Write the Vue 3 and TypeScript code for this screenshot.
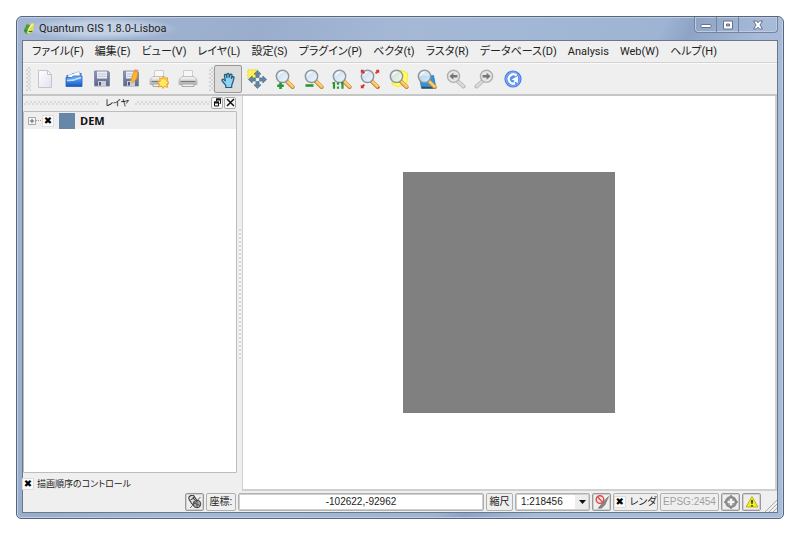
<script setup lang="ts">
import { ref } from 'vue'

interface Tool {
  id: string
  label: string
}

const menus: string[] = [
  'ファイル(F)', '編集(E)', 'ビュー(V)', 'レイヤ(L)', '設定(S)', 'プラグイン(P)',
  'ベクタ(t)', 'ラスタ(R)', 'データベース(D)', 'Analysis', 'Web(W)', 'ヘルプ(H)',
]

const fileTools: Tool[] = [
  { id: 'new', label: '新規' },
  { id: 'open', label: '開く' },
  { id: 'save', label: '保存' },
  { id: 'save-as', label: '名前をつけて保存' },
  { id: 'composer', label: '新規プリントコンポーザ' },
  { id: 'print', label: '印刷' },
]

const mapTools: Tool[] = [
  { id: 'pan', label: '地図移動' },
  { id: 'pan-selection', label: '選択部分に移動' },
  { id: 'zoom-in', label: '拡大' },
  { id: 'zoom-out', label: '縮小' },
  { id: 'zoom-actual', label: '実ピクセルサイズ' },
  { id: 'zoom-full', label: '全域表示' },
  { id: 'zoom-selection', label: '選択部分にズーム' },
  { id: 'zoom-layer', label: 'レイヤの領域にズーム' },
  { id: 'zoom-last', label: '直前の表示領域' },
  { id: 'zoom-next', label: '次の表示領域' },
  { id: 'refresh', label: '再読み込み' },
]

const activeTool = ref('pan')
const layerVisible = ref(true)
const controlOrder = ref(true)
const render = ref(true)
const coordinates = ref('-102622,-92962')
const scale = ref('1:218456')
</script>

<template>
  <div class="desktop">
    <svg class="defs" aria-hidden="true">
      <defs>
        <linearGradient id="handle" x1="0" y1="1" x2="1" y2="0">
          <stop offset="0" stop-color="#d98522" />
          <stop offset=".55" stop-color="#ffd873" />
          <stop offset="1" stop-color="#e5a23c" />
        </linearGradient>
        <linearGradient id="glass" x1="0" y1="0" x2="1" y2="1">
          <stop offset="0" stop-color="#bcd5f0" />
          <stop offset="1" stop-color="#f4f9fe" />
        </linearGradient>
        <linearGradient id="metal" x1="0" y1="0" x2="0" y2="1">
          <stop offset="0" stop-color="#8f98b4" />
          <stop offset="1" stop-color="#5b6586" />
        </linearGradient>
        <linearGradient id="blue" x1="0" y1="0" x2="0" y2="1">
          <stop offset="0" stop-color="#74b5fa" />
          <stop offset="1" stop-color="#1556c4" />
        </linearGradient>
        <linearGradient id="paper" x1="0" y1="0" x2="1" y2="1">
          <stop offset="0" stop-color="#ffffff" />
          <stop offset="1" stop-color="#dfe2ec" />
        </linearGradient>
        <linearGradient id="plastic" x1="0" y1="0" x2="0" y2="1">
          <stop offset="0" stop-color="#fbfbfb" />
          <stop offset="1" stop-color="#a9a9a9" />
        </linearGradient>
        <symbol id="lens" viewBox="0 0 20 20">
          <path d="M12 12.5 17.6 18" stroke="#b98348" stroke-width="4" stroke-linecap="round" />
          <path d="M12.4 12.6 17.4 17.5" stroke="url(#handle)" stroke-width="3" stroke-linecap="round" />
          <circle cx="7.5" cy="7.3" r="6.2" fill="url(#glass)" fill-opacity=".85" stroke="#8e949c" stroke-width="1.4" />
          <path d="M3.6 6.6a4 4 0 0 1 4-3.3" fill="none" stroke="#fff" stroke-width="1.2" />
        </symbol>
        <symbol id="printer" viewBox="0 0 20 20">
          <path d="M5.5 1.5h9V9h-9z" fill="#f8f8f8" stroke="#cdcdcd" />
          <path d="M4 7.5h12q2.6 2 3 4.5v3.5q-9 2-18 0V12q.4-2.5 3-4.5z" fill="url(#plastic)" stroke="#b0b0b0" stroke-width=".8" />
          <path d="M2.5 12.5h15" stroke="#777" stroke-width="1.2" />
          <path d="M4 15h12v2.5H4z" fill="#eee" stroke="#999" stroke-width=".8" />
        </symbol>
        <symbol id="disk" viewBox="0 0 20 20">
          <path d="M2.5 2H16l1.5 1.5V17h-15z" fill="url(#metal)" stroke="#7b83a0" stroke-width=".8" />
          <path d="M5 2.5h10v7H5z" fill="#edf0f6" />
          <path d="M5.5 5h9M5.5 7.3h9" stroke="#b9c2d4" />
          <path d="M6 12h8v5H6z" fill="#c9cedb" />
          <path d="M7 13h2v3.5H7z" fill="#50597a" />
        </symbol>
        <symbol id="arrow" viewBox="0 0 8 8">
          <path d="M4 .4 7.6 4.2h-2v3.2H2.4V4.2h-2z" fill="#6188a3" stroke="#466a84" stroke-width=".6" />
        </symbol>
      </defs>
    </svg>

    <main class="window">
      <header class="titlebar">
        <h1 class="title">
          <svg width="12" height="13" viewBox="0 0 13 13" aria-hidden="true">
            <path d="M4 1.5 8 3 6.5 12H2.8L.7 9z" fill="#4e9d3b" />
            <path d="M8.4 1 12 .6l-.9 7.7-5 4.2L4.4 11z" fill="#dde345" />
            <path d="M10.7 1.6 6.5 6.4 5.1 11" fill="none" stroke="#fff9a7" stroke-width="1.2" />
            <path d="M6 9.7h4M1.6 8.6 4 9.5" stroke="#236b2c" />
          </svg>
          Quantum GIS 1.8.0-Lisboa
        </h1>
        <div class="caption">
          <button type="button" aria-label="最小化">
            <svg width="12" height="10" viewBox="0 0 12 10"><rect x="1" y="4.5" width="10" height="3" rx=".8" fill="#fff" stroke="#65718a" /></svg>
          </button>
          <button type="button" aria-label="最大化">
            <svg width="12" height="10" viewBox="0 0 12 10"><path d="M1.5 1h9v8h-9zM4.5 4v2h3V4z" fill="#fff" fill-rule="evenodd" stroke="#65718a" /></svg>
          </button>
          <button type="button" class="close" aria-label="閉じる">
            <svg width="12" height="10" viewBox="0 0 12 10"><path d="M1.5 1h3L6 2.8 7.5 1h3L8 5l2.5 4h-3L6 7.2 4.5 9h-3L4 5z" fill="#fff" stroke="#65718a" /></svg>
          </button>
        </div>
      </header>

      <div class="client">
        <nav class="menubar">
          <button v-for="menu in menus" :key="menu" type="button">{{ menu }}</button>
        </nav>

        <div class="toolbar">
          <span class="grip"></span>
          <div class="tools file-tools">
            <button v-for="tool in fileTools" :key="tool.id" type="button" :aria-label="tool.label">
              <svg width="20" height="20" viewBox="0 0 20 20">
                <template v-if="tool.id === 'new'">
                  <path d="M3.5 1.5h9l4 4v13h-13z" fill="url(#paper)" stroke="#c2c4d0" />
                  <path d="M12.5 1.5v4h4z" fill="#fff" stroke="#c2c4d0" />
                </template>
                <template v-else-if="tool.id === 'open'">
                  <path d="M2.5 6h5l1-2h9v10h-15z" fill="#2d6fd4" />
                  <path d="m4 6.5 11-4 1.5 5v6H4z" fill="#fff" stroke="#9fbbe1" stroke-width=".7" />
                  <path d="M2 8.5h5.5l2-1.5H18v10.5H2z" fill="url(#blue)" stroke="#2162bf" stroke-width=".8" />
                  <path d="M3 11.5q7 .2 14-3" fill="none" stroke="#c2e0ff" stroke-width="1.5" />
                </template>
                <use v-else-if="tool.id === 'save'" href="#disk" width="20" height="20" />
                <template v-else-if="tool.id === 'save-as'">
                  <use href="#disk" width="20" height="20" />
                  <path d="m12 1 3.5-.5.8 8.5-3 5-2.3-1.5z" fill="#ffb52d" stroke="#e0922a" stroke-width=".7" transform="rotate(14 13 7)" />
                  <path d="m14 .8 3.3.8-.6 2.2-3.3-.8z" fill="#f0906a" />
                </template>
                <template v-else>
                  <use href="#printer" width="20" height="20" />
                  <path
                    v-if="tool.id === 'composer'"
                    d="m14.2 7 1.3 3.3 3.2-1.6-1.1 3.4 2.4 1.7-2.4 1.3 1.1 3.2-3.2-1-1.6 2.2-1.3-2.6-3.5 1.2 1.6-3.2-2.4-1.7 3-1-.7-3.4 2.6 1.3z"
                    fill="#ffec5e" stroke="#f3a021"
                  />
                </template>
              </svg>
            </button>
          </div>
          <span class="grip"></span>
          <div class="tools map-tools">
            <button
              v-for="tool in mapTools"
              :key="tool.id"
              type="button"
              :class="{ active: activeTool === tool.id }"
              :aria-label="tool.label"
              :aria-pressed="activeTool === tool.id"
              @click="activeTool = tool.id"
            >
              <svg width="20" height="20" viewBox="0 0 20 20">
                <path
                  v-if="tool.id === 'pan'"
                  d="M7.8 18.5v-2.2L4.2 12c-1-1.5.5-2.4 1.6-1.4l1.5 1.3-.9-5.3c-.1-1.4 1.6-1.7 2-.3l.5 2.3V5.2c.1-1.3 1.9-1.3 2.1 0l.2 3.1.9-2.5c.5-1.2 2.2-.7 1.9.6l-.6 3 1-1.4c.8-1 2.1-.2 1.6 1l-1.5 5.3-.8 2v2.2z"
                  fill="#8fd3f2" stroke="#265b7c" stroke-width="1.2" stroke-linejoin="round"
                />
                <template v-else-if="tool.id === 'pan-selection'">
                  <path d="M.8.8h9.7v8L.8 9.5z" fill="#ffee55" stroke="#e5ce3a" stroke-width=".8" stroke-dasharray="2 1" />
                  <use href="#arrow" x="6.5" y="1" width="8" height="8" />
                  <use href="#arrow" x="6.5" y="1" width="8" height="8" transform="rotate(90 10.5 10.5)" />
                  <use href="#arrow" x="6.5" y="1" width="8" height="8" transform="rotate(180 10.5 10.5)" />
                  <use href="#arrow" x="6.5" y="1" width="8" height="8" transform="rotate(270 10.5 10.5)" />
                </template>
                <template v-else-if="tool.id === 'refresh'">
                  <circle cx="10" cy="10" r="8" fill="#5e91ed" stroke="#4a7ce0" stroke-width="1.2" />
                  <circle cx="10" cy="10" r="7" fill="none" stroke="#8fb4f6" stroke-width=".8" />
                  <path d="M13.5 6.6A4.6 4.6 0 1 0 12 14.2" fill="none" stroke="#fff" stroke-width="2.2" />
                  <path d="m8.5 10.5 6.5-3.500v7l-2.300-1.300-2.200 1.800 1-3z" fill="#fff" />
                </template>
                <g v-else-if="tool.id === 'zoom-last' || tool.id === 'zoom-next'" :class="{ mirrored: tool.id === 'zoom-next' }">
                  <path d="m12 12.5 5.5 5" stroke="#b5b5b5" stroke-width="4" stroke-linecap="round" />
                  <path d="m12.2 12.6 5 4.6" stroke="#dadada" stroke-width="2.6" stroke-linecap="round" />
                  <circle cx="7.5" cy="7.3" r="6.1" fill="#e6e6e6" stroke="#b0b0b0" stroke-width="1.4" />
                  <path d="m3.4 7.3 4-3.5v2.3h4v2.4h-4v2.3z" fill="#757575" />
                </g>
                <template v-else>
                  <path v-if="tool.id === 'zoom-selection'" d="m4 3.5 9-2 5.5 2.7-.8 10.3-9 3.3L3 15z" fill="#ffff62" stroke="#f3ea28" />
                  <path v-if="tool.id === 'zoom-layer'" d="m2.5 8 14-1.5L19 19.3H4.5z" fill="#249bdf" stroke="#35658b" stroke-width=".7" />
                  <path v-if="tool.id === 'zoom-layer'" d="m5 17.5 14 .6v1.4H4.6z" fill="#3f4958" />
                  <use href="#lens" width="20" height="20" />
                  <path v-if="tool.id === 'zoom-in'" d="M2.2 16.7h6.6M5.5 13.5v6.4" stroke="#299735" stroke-width="2.6" />
                  <path v-if="tool.id === 'zoom-out'" d="M1.5 16.5h8" stroke="#299735" stroke-width="2.6" />
                  <path v-if="tool.id === 'zoom-actual'" d="M.5 14H2v5.8M9 14h1.5v5.8M6 13.5v2.2M6 17.6v2.2" fill="none" stroke="#299735" stroke-width="2.2" />
                  <path v-if="tool.id === 'zoom-full'" d="M.8 4V.8H4L3.5 2 5 3.8 3.8 5 2 3.5zM19.2 4V.8H16l.5 1.2L15 3.8 16.2 5 18 3.5zM.8 16v3.2H4L3.5 18 5 16.2 3.8 15 2 16.5zM19.2 17.5v1.7H17z" fill="#d83331" />
                </template>
              </svg>
            </button>
          </div>
        </div>

        <div class="workspace">
          <aside class="dock">
            <div class="dock-title">
              <span class="dots"></span>
              <h2>レイヤ</h2>
              <span class="dots"></span>
              <button type="button" aria-label="フロート">
                <svg width="9" height="9" viewBox="0 0 9 9"><path d="M3.5 3V1h4v4.5h-1M1.5 4h4v4h-4z" fill="none" stroke="#111" /><path d="M3 1.5h5M1 4.5h5" stroke="#111" stroke-width="2" /></svg>
              </button>
              <button type="button" aria-label="パネルを閉じる">
                <svg width="9" height="9" viewBox="0 0 9 9"><path d="m1 1 7 7M8 1 1 8" stroke="#111" stroke-width="1.5" /></svg>
              </button>
            </div>
            <div class="tree">
              <div class="layer">
                <button type="button" class="expand" aria-label="展開">
                  <svg width="8" height="8" viewBox="0 0 9 9"><path d="M.5.5h8v8h-8z" fill="#f8f8f8" stroke="#999" /><path d="M2 4.5h5M4.5 2v5" stroke="#555" /></svg>
                </button>
                <span class="branch"></span>
                <input id="layer-dem" v-model="layerVisible" type="checkbox" />
                <span class="swatch"></span>
                <label for="layer-dem">DEM</label>
              </div>
            </div>
            <label class="order"><input v-model="controlOrder" type="checkbox" />描画順序のコントロール</label>
          </aside>
          <div class="splitter"><span></span></div>
          <section class="canvas" aria-label="地図">
            <div class="raster"></div>
          </section>
        </div>

        <footer class="status">
          <button type="button" class="icon-button" aria-label="マウス位置の表示切替">
            <svg width="14" height="14" viewBox="0 0 14 14">
              <rect x="2" y="0" width="6" height="10" rx="3" fill="#ddd" stroke="#333" transform="rotate(-32 5 5)" />
              <path d="m2.5 5 4-2.5M5 2l1.5 3" stroke="#333" />
              <circle cx="9" cy="9" r="3.8" fill="#aaa" stroke="#444" />
              <path d="m2 13 10.5-11M6 8l6 2.5M9 5.5v7" stroke="#444" stroke-width=".8" />
            </svg>
          </button>
          <label class="cell coord-label" for="coordinates">座標:</label>
          <input id="coordinates" v-model="coordinates" class="coordinates" type="text" />
          <label class="cell scale-label" for="scale">縮尺</label>
          <div class="combo">
            <select id="scale" v-model="scale">
              <option>1:218456</option>
              <option>1:500000</option>
              <option>1:100000</option>
            </select>
            <svg width="7" height="4" viewBox="0 0 7 4" aria-hidden="true"><path d="M0 0h7L3.5 4z" fill="#111" /></svg>
          </div>
          <button type="button" class="icon-button" aria-label="描画の停止">
            <svg width="14" height="14" viewBox="0 0 14 14">
              <path d="M13.5 1.5 10 9.5 6.8 13l-3.5.3 3.9-5z" fill="#888" stroke="#666" stroke-width=".6" />
              <circle cx="5" cy="4.5" r="3.8" fill="#f8e8e8" stroke="#df4b4b" stroke-width="1.4" />
              <path d="m2.5 2 5 5" stroke="#df4b4b" stroke-width="1.4" />
            </svg>
          </button>
          <label class="cell render"><input v-model="render" type="checkbox" />レンダ</label>
          <output class="cell epsg">EPSG:2454</output>
          <button type="button" class="icon-button" aria-label="CRS の状態">
            <svg width="14" height="14" viewBox="0 0 14 14">
              <circle cx="7" cy="7" r="4.8" fill="#aaa" stroke="#8b8b8b" stroke-width="2.6" />
              <path d="M7 0v4M7 10v4M0 7h4M10 7h4" stroke="#858585" stroke-width="1.6" />
              <path d="M7 3.5v7M3.5 7h7" stroke="#f4f4f4" stroke-width="2.2" />
            </svg>
          </button>
          <button type="button" class="icon-button" aria-label="警告">
            <svg width="14" height="14" viewBox="0 0 14 14">
              <path d="M7 1.5 13 12H1z" fill="#f6ef16" stroke="#b7b12c" stroke-linejoin="round" />
              <path d="M7 5v3.7M7 10v1.4" stroke="#222" stroke-width="1.5" />
            </svg>
          </button>
          <svg class="resize" width="12" height="12" viewBox="0 0 12 12" aria-hidden="true"><path d="M0 12 12 0M4 12l8-8M8 12l4-4" stroke="#aaa" /></svg>
        </footer>
      </div>
    </main>
  </div>
</template>

<style>
body {
  background: #fff;
}
</style>

<style scoped>
* {
  box-sizing: border-box;
}
.desktop {
  display: flex;
  min-height: 100vh;
  padding: 16px;
  color: #222;
  font: 11px/16px Roboto, "Noto Sans CJK JP", sans-serif;
  font-feature-settings: "palt";
}
.defs {
  position: absolute;
  width: 0;
  height: 0;
}
button,
input,
select {
  margin: 0;
  padding: 0;
  border: 0;
  background: none;
  color: inherit;
  font: inherit;
  font-feature-settings: inherit;
}
svg {
  display: block;
  flex: none;
}
.window {
  display: flex;
  flex: 1;
  flex-direction: column;
  min-width: 0;
  padding: 0 5px 5px;
  border: 1px solid #58657a;
  border-radius: 6px 6px 5px 5px;
  background: linear-gradient(115deg, #a3b6d3 0%, #9aadcc 25%, #a5b9d7 40%, #9fb4d3 65%, #8ea4c6 68%, #a7bad8 75%, #a8bcd9 100%);
  box-shadow: inset 0 0 0 1px #bfd0e6;
}
.titlebar {
  display: flex;
  justify-content: space-between;
  height: 23px;
}
.title {
  display: flex;
  align-items: center;
  gap: 4px;
  margin: 0;
  padding: 0 12px 0 1px;
  background: radial-gradient(closest-side, #c3d1e5 50%, transparent);
  color: #222;
  font-size: 11px;
  font-weight: 400;
}
.caption {
  display: flex;
  height: 16px;
  border: 1px solid #74849f;
  border-top: 0;
  border-radius: 0 0 4px 4px;
  box-shadow: inset 0 0 0 1px #bdcce1;
}
.caption button {
  display: grid;
  place-items: center;
  width: 22px;
  border-right: 1px solid #74849f;
}
.caption .close {
  width: 38px;
  border-right: 0;
}
.client {
  display: flex;
  flex: 1;
  flex-direction: column;
  border: 1px solid #6b788c;
  background: #efefef;
}
.menubar {
  display: flex;
  gap: 11px;
  height: 22px;
  padding: 1px 9px 0;
  border-bottom: 1px solid #d2d2d2;
}
.menubar button {
  white-space: nowrap;
}
.toolbar {
  display: flex;
  align-items: center;
  height: 33px;
  padding-left: 3px;
  border-top: 1px solid #fafafa;
  border-bottom: 2px solid #c6c6c6;
}
.grip {
  width: 5px;
  height: 24px;
  background: conic-gradient(#d4d4d4 25%, transparent 0 50%, #d4d4d4 0 75%, transparent 0) 0 0 / 4px 4px;
}
.tools {
  display: grid;
  grid-auto-columns: 1fr;
  grid-auto-flow: column;
  height: 28px;
}
.file-tools {
  width: 171px;
  margin-right: 7px;
}
.map-tools {
  width: 313px;
}
.tools button {
  display: grid;
  place-items: center;
  min-width: 0;
  border: 1px solid transparent;
  border-radius: 2px;
}
.tools .active {
  border-color: #999;
  background: #dcdcdc;
}
.mirrored {
  transform: translateX(20px) scaleX(-1);
}
.workspace {
  display: flex;
  flex: 1;
  min-height: 0;
}
.dock {
  display: flex;
  flex: 0 0 214px;
  flex-direction: column;
}
.dock-title {
  display: flex;
  align-items: center;
  gap: 1px;
  height: 15px;
  padding: 0 1px 2px;
}
.dock-title h2 {
  margin: 0 5px;
  color: #111;
  font-size: 9px;
  font-weight: 400;
  line-height: 12px;
}
.dots {
  flex: 1;
  height: 4px;
  background: conic-gradient(#d9d9d9 25%, transparent 0 50%, #d9d9d9 0 75%, transparent 0) 0 0 / 4px 4px;
}
.dock-title button {
  display: grid;
  place-items: center;
  width: 12px;
  height: 12px;
  border: 1px solid #aaa;
  border-radius: 2px;
  background: #f8f8f8;
}
.tree {
  flex: 1;
  border: 1px solid #bdbdbd;
  border-radius: 1px;
  background: #fff;
}
.layer {
  display: flex;
  align-items: center;
  height: 17px;
  padding-left: 4px;
  background: #efefef;
  color: #111;
  font-family: "Open Sans", sans-serif;
  font-weight: 700;
}
.branch {
  width: 5px;
  margin-right: 2px;
  border-top: 1px dotted #999;
}
input[type="checkbox"] {
  display: grid;
  place-items: center;
  flex: none;
  width: 10px;
  height: 10px;
  appearance: none;
  background: #fcfcfc;
  outline: 1px solid #ddd;
}
input[type="checkbox"]:checked::before {
  color: #000;
  content: "✖";
  font: 10px/10px "DejaVu Sans", sans-serif;
}
.swatch {
  width: 16px;
  height: 16px;
  margin: 0 5px 0 6px;
  background: #6787a8;
}
.order {
  display: flex;
  align-items: center;
  gap: 4px;
  height: 18px;
  padding-top: 4px;
  font-size: 9px;
}
.splitter {
  display: grid;
  place-items: center;
  flex: 0 0 5px;
}
.splitter span {
  width: 2px;
  height: 130px;
  background: repeating-linear-gradient(#d4d4d4 0 2px, #fafafa 2px 4px);
}
.canvas {
  display: grid;
  place-items: center;
  flex: 1;
  border: solid #d0d0d0;
  border-width: 0 2px 2px 1px;
  background: #fff;
}
.raster {
  width: 212px;
  height: 241px;
  background: #808080;
}
.status {
  display: flex;
  align-items: center;
  gap: 2px;
  height: 21px;
  padding-left: 162px;
  font-family: "Liberation Sans", "Noto Sans CJK JP", sans-serif;
  font-size: 10px;
}
.icon-button,
.cell,
.coordinates,
.combo {
  height: 18px;
  border: 1px solid #b0b0b0;
  border-radius: 2px;
}
.icon-button {
  display: grid;
  place-items: center;
  flex: 0 0 19px;
  border-color: #999;
  box-shadow: inset 0 0 0 1px #d0d0d0;
}
.cell {
  display: flex;
  align-items: center;
  justify-content: center;
  flex: none;
  white-space: nowrap;
}
.coord-label {
  width: 30px;
}
.scale-label {
  width: 27px;
}
.coordinates {
  flex: 1;
  min-width: 0;
  background: #fff;
  box-shadow: inset 0 0 0 1px #d0d0d0;
  text-align: center;
}
.combo {
  display: grid;
  grid-template-columns: 1fr 14px;
  place-items: center;
  width: 75px;
  background: linear-gradient(to right, #fff 59px, #ededed 59px);
  box-shadow: inset 0 0 0 1px #d0d0d0;
}
.combo select {
  grid-area: 1 / 1 / 2 / 3;
  width: 100%;
  height: 16px;
  padding-left: 5px;
  appearance: none;
}
.combo svg {
  grid-area: 1 / 2;
  pointer-events: none;
}
.render {
  gap: 5px;
  width: 45px;
}
.epsg {
  width: 59px;
  color: #a0a0a0;
}
.resize {
  align-self: flex-end;
  margin-left: 2px;
}
</style>
